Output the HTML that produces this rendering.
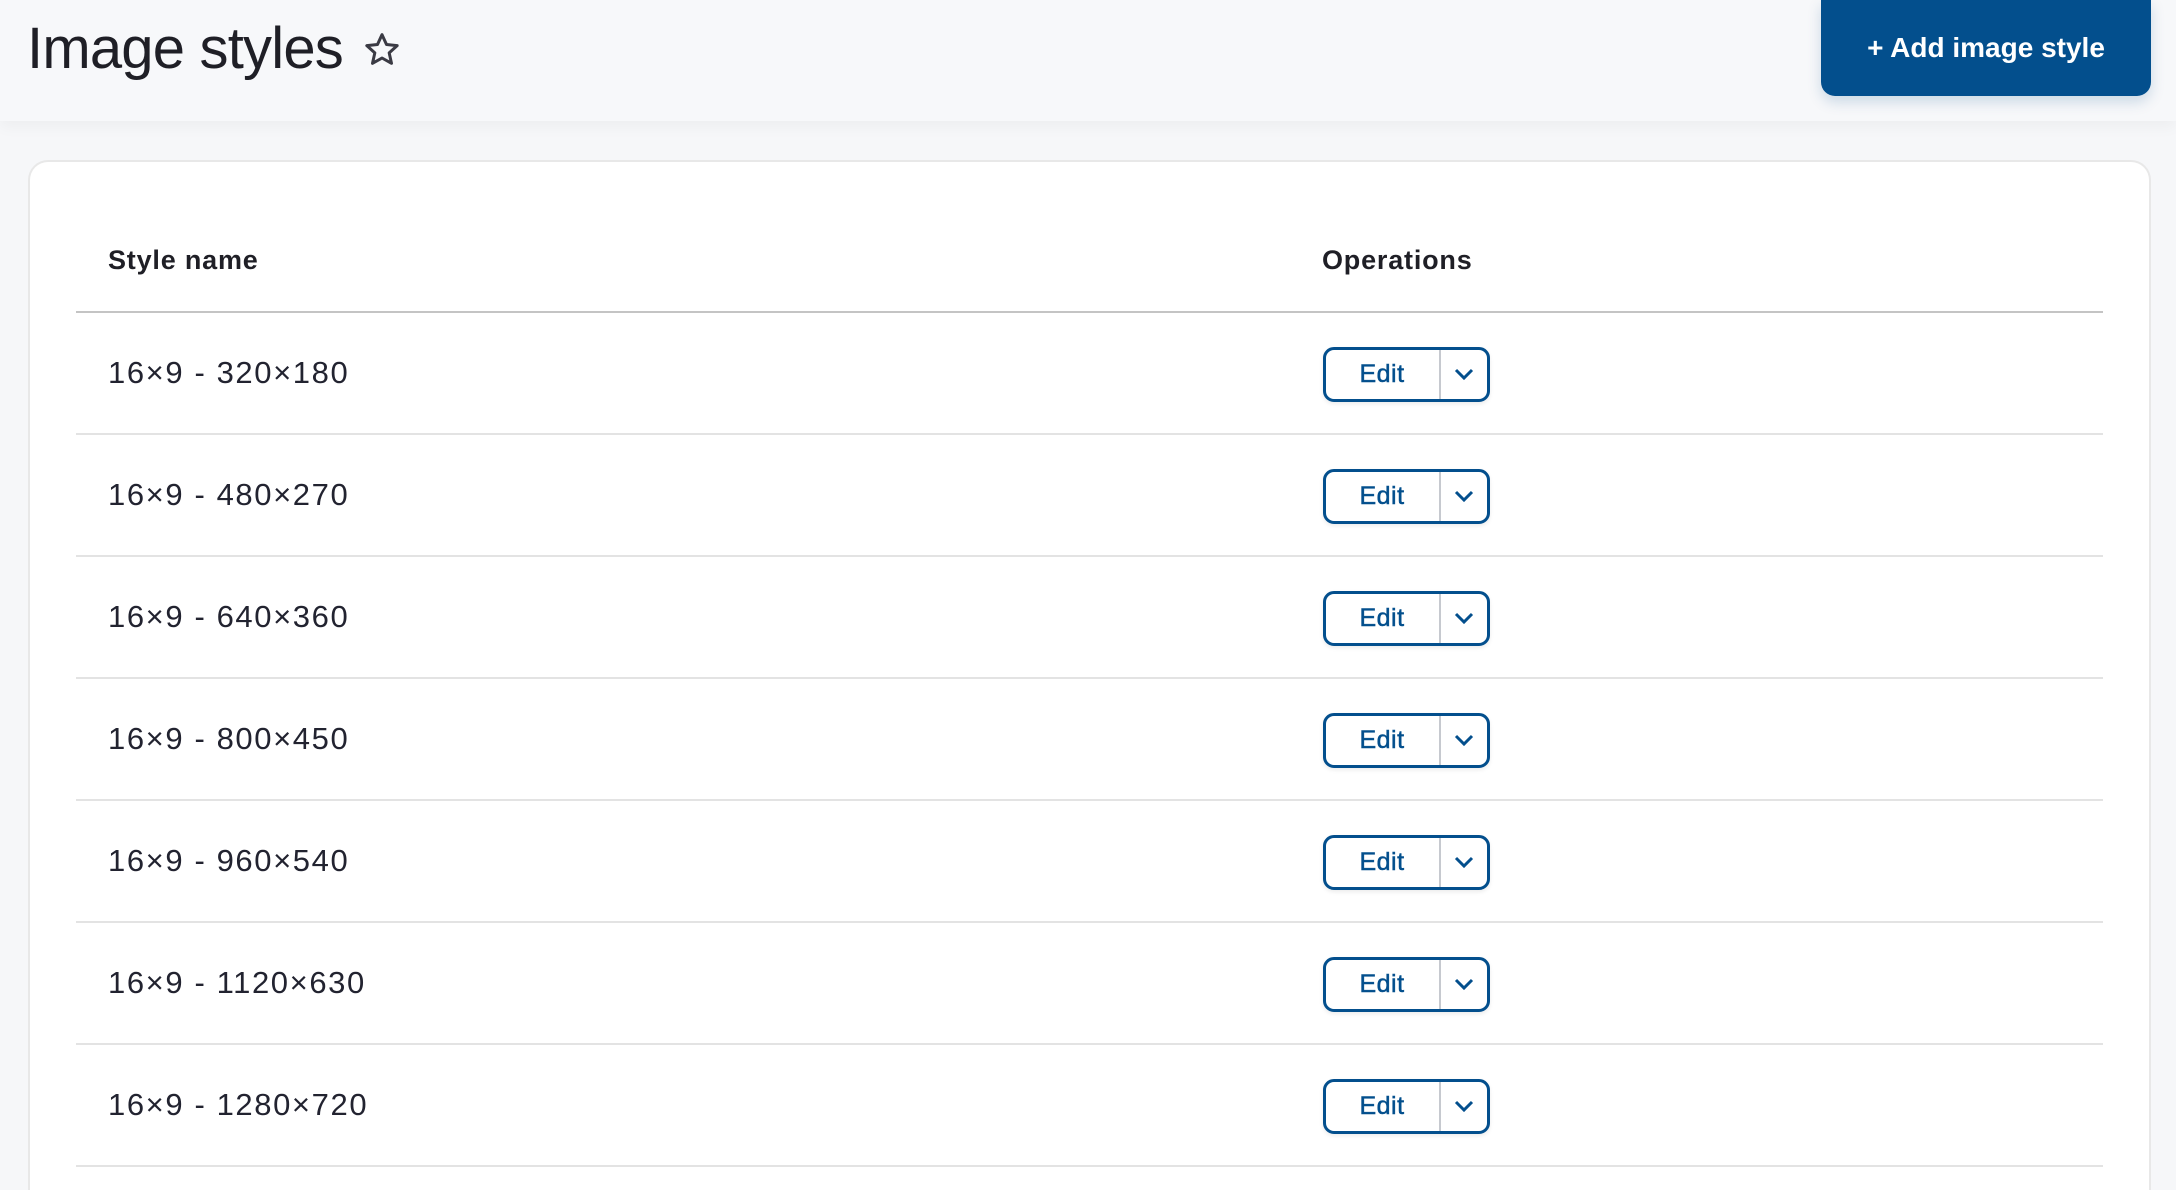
<!DOCTYPE html>
<html><head><meta charset="utf-8"><style>
*{box-sizing:border-box;margin:0;padding:0}
html,body{width:2176px;height:1190px;overflow:hidden}
body{background:#f6f7f9;font-family:"Liberation Sans",Arial,sans-serif;position:relative}
.hdr{position:absolute;left:0;top:0;width:2176px;height:121px;background:#f7f8fa;box-shadow:0 6px 14px rgba(0,0,0,0.04)}
h1{position:absolute;left:27px;top:14px;font-size:58px;font-weight:400;color:#1f1f26;letter-spacing:-0.8px;line-height:70px}
.star{position:absolute;left:362px;top:30px}
.add{position:absolute;left:1821px;top:0;width:330px;height:96px;background:#034f8d;border-radius:0 0 14px 14px;color:#fff;font-size:28px;font-weight:700;line-height:96px;text-align:center;box-shadow:0 6px 14px rgba(3,79,141,0.18)}
.card{position:absolute;left:28px;top:160px;width:2123px;height:1030px;background:#fff;border:2px solid #e8e8e8;border-bottom:none;border-radius:20px 20px 0 0}
.th{position:absolute;top:245px;font-size:27px;font-weight:700;color:#1f1f26;letter-spacing:0.8px}
.hline{position:absolute;left:76px;width:2027px;height:2px;background:#c4c4c4;top:311px}
.sep{position:absolute;left:76px;width:2027px;height:2px;background:#e3e3e3}
.name{position:absolute;left:108px;font-size:31px;color:#222330;line-height:40px;letter-spacing:1.6px}
.eb{position:absolute;left:1323px;width:167px;height:55px;border:3px solid #034f8d;border-radius:11px;background:#fff;box-shadow:0 2px 4px rgba(0,0,0,0.08)}
.eb span{position:absolute;left:0;width:112px;top:0;line-height:49px;text-align:center;font-size:25px;color:#034f8d;font-weight:400;-webkit-text-stroke:0.5px #034f8d;letter-spacing:0.5px}
.eb i{position:absolute;left:113px;top:0;width:2px;height:49px;background:#c6c9cf}
.eb svg{position:absolute;left:125px;top:15px}
</style></head><body>
<div class="hdr"></div>
<h1>Image styles</h1>
<svg class="star" width="40" height="40" viewBox="0 0 24 24"><path d="M12 2.8l2.7 5.9 6.4.7-4.8 4.3 1.4 6.3L12 16.8l-5.7 3.2 1.4-6.3-4.8-4.3 6.4-.7z" fill="none" stroke="#3b3b44" stroke-width="1.8" stroke-linejoin="round"/></svg>
<div class="add">+ Add image style</div>
<div class="card"></div>
<div class="th" style="left:108px">Style name</div>
<div class="th" style="left:1322px">Operations</div>
<div class="hline"></div>

<div class="name" style="top:353px">16×9 - 320×180</div>
<div class="eb" style="top:347px"><span>Edit</span><i></i><svg width="26" height="18" viewBox="0 0 26 18"><path d="M5 5l8 8 8-8" fill="none" stroke="#034f8d" stroke-width="3"/></svg></div>
<div class="sep" style="top:433px"></div>

<div class="name" style="top:475px">16×9 - 480×270</div>
<div class="eb" style="top:469px"><span>Edit</span><i></i><svg width="26" height="18" viewBox="0 0 26 18"><path d="M5 5l8 8 8-8" fill="none" stroke="#034f8d" stroke-width="3"/></svg></div>
<div class="sep" style="top:555px"></div>

<div class="name" style="top:597px">16×9 - 640×360</div>
<div class="eb" style="top:591px"><span>Edit</span><i></i><svg width="26" height="18" viewBox="0 0 26 18"><path d="M5 5l8 8 8-8" fill="none" stroke="#034f8d" stroke-width="3"/></svg></div>
<div class="sep" style="top:677px"></div>

<div class="name" style="top:719px">16×9 - 800×450</div>
<div class="eb" style="top:713px"><span>Edit</span><i></i><svg width="26" height="18" viewBox="0 0 26 18"><path d="M5 5l8 8 8-8" fill="none" stroke="#034f8d" stroke-width="3"/></svg></div>
<div class="sep" style="top:799px"></div>

<div class="name" style="top:841px">16×9 - 960×540</div>
<div class="eb" style="top:835px"><span>Edit</span><i></i><svg width="26" height="18" viewBox="0 0 26 18"><path d="M5 5l8 8 8-8" fill="none" stroke="#034f8d" stroke-width="3"/></svg></div>
<div class="sep" style="top:921px"></div>

<div class="name" style="top:963px">16×9 - 1120×630</div>
<div class="eb" style="top:957px"><span>Edit</span><i></i><svg width="26" height="18" viewBox="0 0 26 18"><path d="M5 5l8 8 8-8" fill="none" stroke="#034f8d" stroke-width="3"/></svg></div>
<div class="sep" style="top:1043px"></div>

<div class="name" style="top:1085px">16×9 - 1280×720</div>
<div class="eb" style="top:1079px"><span>Edit</span><i></i><svg width="26" height="18" viewBox="0 0 26 18"><path d="M5 5l8 8 8-8" fill="none" stroke="#034f8d" stroke-width="3"/></svg></div>
<div class="sep" style="top:1165px"></div>
</body></html>
